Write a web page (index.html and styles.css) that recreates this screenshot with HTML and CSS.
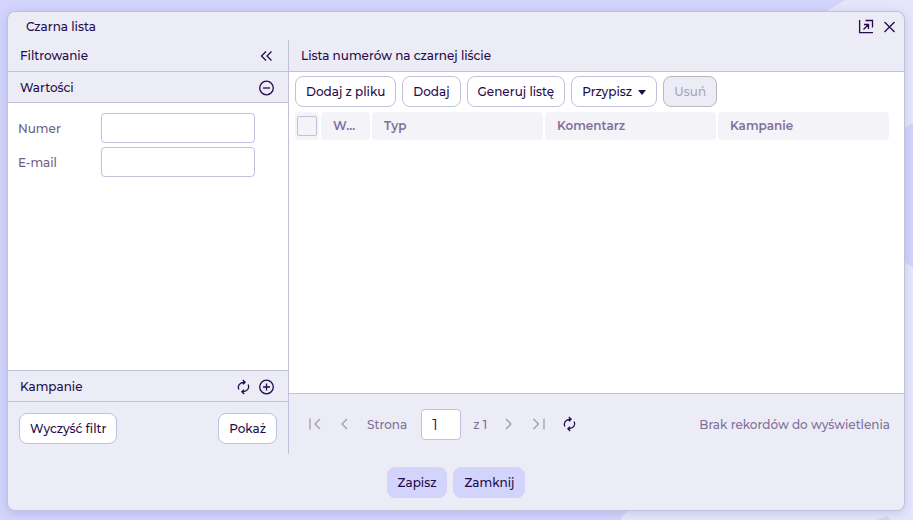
FILE: index.html
```html
<!DOCTYPE html>
<html lang="pl">
<head>
    <meta charset="UTF-8">
    <title>Czarna lista</title>
    <link rel="stylesheet" href="styles.css">
</head>
<body>
    <svg class="backdrop" viewBox="0 0 913 520" preserveAspectRatio="none" aria-hidden="true">
        <path class="shape-light" d="M845 0H913V123L620 300V170L825 12ZM913 267L700 140V410L620 520H913Z"/>
        <path class="shape-dark" d="M913 123L700 255V140L913 267ZM877 520L887 516L890 520Z"/>
    </svg>

    <div class="window">
        <header class="window-header">
            <h1>Czarna lista</h1>
            <div class="tools">
                <button type="button" class="icon-button" aria-label="Otwórz w nowym oknie">
                    <svg width="16" height="16" viewBox="0 0 16 16"><path d="M1.6 1V13.6H15M7.5 1.5H14.5V8.5M5.5 10.5L10 6M6 5.5H10.5V10"/></svg>
                </button>
                <button type="button" class="icon-button" aria-label="Zamknij okno">
                    <svg width="16" height="16" viewBox="0 0 16 16"><path d="M3.5 3L13.5 13M13.5 3L3.5 13"/></svg>
                </button>
            </div>
        </header>

        <div class="window-body">
            <aside class="filters">
                <div class="panel-header">
                    <h2>Filtrowanie</h2>
                    <button type="button" class="icon-button" aria-label="Zwiń panel">
                        <svg width="16" height="16" viewBox="0 0 16 16"><path d="M7 3.5L2.5 8L7 12.5M12.5 3.5L8 8L12.5 12.5"/></svg>
                    </button>
                </div>
                <div class="panel-header panel-section">
                    <h2>Wartości</h2>
                    <button type="button" class="icon-button" aria-label="Zwiń wartości">
                        <svg width="16" height="16" viewBox="0 0 16 16"><circle cx="7.5" cy="8" r="6.8"/><path d="M4 8H11"/></svg>
                    </button>
                </div>
                <form class="filter-form">
                    <label for="number">Numer</label>
                    <input type="text" id="number" name="number">
                    <label for="email">E-mail</label>
                    <input type="text" id="email" name="email">
                </form>
                <div class="panel-header panel-section panel-section-bottom">
                    <h2>Kampanie</h2>
                    <div class="tools">
                        <button type="button" class="icon-button" aria-label="Odśwież kampanie">
                            <svg width="16" height="16" viewBox="0 0 16 16"><path d="M2.8 10.5C1.2 6.8 3.4 3.5 8.6 3.2M6.8 1L9.1 3.2L7 5.4M12.2 5.5C13.8 9.2 11.6 12.5 6.4 12.8M8.2 15L5.9 12.8L8 10.6"/></svg>
                        </button>
                        <button type="button" class="icon-button" aria-label="Rozwiń kampanie">
                            <svg width="16" height="16" viewBox="0 0 16 16"><circle cx="7.5" cy="8" r="6.8"/><path d="M4 8H11M7.5 4.5V11.5"/></svg>
                        </button>
                    </div>
                </div>
                <div class="filter-actions">
                    <button type="button" class="button">Wyczyść filtr</button>
                    <button type="button" class="button">Pokaż</button>
                </div>
            </aside>

            <main class="list">
                <div class="panel-header">
                    <h2>Lista numerów na czarnej liście</h2>
                </div>
                <div class="toolbar">
                    <button type="button" class="button">Dodaj z pliku</button>
                    <button type="button" class="button">Dodaj</button>
                    <button type="button" class="button">Generuj listę</button>
                    <button type="button" class="button">Przypisz <span class="caret"></span></button>
                    <button type="button" class="button" disabled>Usuń</button>
                </div>
                <div class="grid">
                    <table>
                        <thead>
                            <tr>
                                <th class="col-check"><input type="checkbox" aria-label="Zaznacz wszystko"></th>
                                <th class="col-value">W...</th>
                                <th>Typ</th>
                                <th>Komentarz</th>
                                <th>Kampanie</th>
                            </tr>
                        </thead>
                        <tbody></tbody>
                    </table>
                </div>
                <div class="pager">
                    <button type="button" class="icon-button" disabled aria-label="Pierwsza strona">
                        <svg width="16" height="16" viewBox="0 0 16 16"><path d="M3 2.5V13.5M13 3L8 8L13 13"/></svg>
                    </button>
                    <button type="button" class="icon-button" disabled aria-label="Poprzednia strona">
                        <svg width="16" height="16" viewBox="0 0 16 16"><path d="M10 3L5 8L10 13"/></svg>
                    </button>
                    <label for="page">Strona</label>
                    <div class="page-number">
                        <input type="text" id="page" name="page" value="1">
                        <span>z 1</span>
                    </div>
                    <button type="button" class="icon-button" disabled aria-label="Następna strona">
                        <svg width="16" height="16" viewBox="0 0 16 16"><path d="M5 3L10 8L5 13"/></svg>
                    </button>
                    <button type="button" class="icon-button" disabled aria-label="Ostatnia strona">
                        <svg width="16" height="16" viewBox="0 0 16 16"><path d="M2.5 3L7.5 8L2.5 13M13 2.5V13.5"/></svg>
                    </button>
                    <button type="button" class="icon-button" aria-label="Odśwież listę">
                        <svg width="16" height="16" viewBox="0 0 16 16"><path d="M3.8 10.5C2.2 6.8 4.4 3.5 9.6 3.2M7.8 1L10.1 3.2L8 5.4M13.2 5.5C14.8 9.2 12.6 12.5 7.4 12.8M9.2 15L6.9 12.8L9 10.6"/></svg>
                    </button>
                    <span class="pager-info">Brak rekordów do wyświetlenia</span>
                </div>
            </main>
        </div>

        <footer class="window-footer">
            <button type="button" class="button button-primary">Zapisz</button>
            <button type="button" class="button button-primary">Zamknij</button>
        </footer>
    </div>
</body>
</html>
```
FILE: styles.css
```css
* {
    box-sizing: border-box;
}

body {
    margin: 0;
    height: 100vh;
    padding: 11px 8px 9px 7px;
    background-color: #d2d4fb;
    color: #250a4c;
    font: 500 12px/16px Montserrat, Inter, sans-serif;
}

.backdrop {
    position: absolute;
    top: 0;
    left: 0;
    width: 100%;
    height: 100%;
    z-index: -1;
}

.shape-light {
    fill: #e5e5fb;
}

.shape-dark {
    fill: #d2d4fb;
}

h1,
h2 {
    margin: 0;
    font-size: 12px;
    font-weight: 500;
}

.window {
    display: flex;
    flex-direction: column;
    height: 100%;
    background-color: #ececf6;
    border: 1px solid #c1c1dc;
    border-radius: 8px;
    box-shadow: 0 2px 10px rgba(80, 80, 150, 0.2);
}

.window-header {
    display: flex;
    align-items: center;
    justify-content: space-between;
    height: 28px;
    padding: 2px 7px 0 18px;
}

.window-body {
    display: flex;
    flex: 1;
    min-height: 0;
}

.tools {
    display: flex;
    gap: 7px;
}

.icon-button {
    display: flex;
    padding: 0;
    border: 0;
    background: none;
    color: inherit;
}

.icon-button:disabled {
    color: #a19bb0;
}

.icon-button svg {
    fill: none;
    stroke: currentColor;
    stroke-width: 1.3;
}

.filters {
    display: flex;
    flex-direction: column;
    width: 281px;
    border-right: 1px solid #c1c1dc;
}

.panel-header {
    display: flex;
    align-items: center;
    justify-content: space-between;
    height: 32px;
    flex-shrink: 0;
    padding: 0 13px 0 12px;
    border-bottom: 1px solid #c1c1dc;
}

.panel-section {
    height: 31px;
    padding-top: 2px;
}

.panel-section-bottom {
    height: 32px;
    border-top: 1px solid #c1c1dc;
}

.filter-form {
    display: grid;
    grid-template-columns: 79px 154px;
    gap: 4px;
    flex: 1;
    align-content: start;
    align-items: center;
    padding: 10px;
    background-color: #fff;
}

.filter-form label {
    line-height: 17px;
    color: #6f6088;
}

input {
    font: inherit;
    color: inherit;
}

input[type="text"] {
    height: 30px;
    width: 100%;
    padding: 0 10px;
    border: 1px solid #c1c1dc;
    border-radius: 4px;
    background-color: #fff;
}

.filter-actions {
    display: flex;
    justify-content: space-between;
    padding: 11px 11px 10px;
}

.button {
    height: 31px;
    padding: 0 10px;
    border: 1px solid #c1c1dc;
    border-radius: 8px;
    background-color: #fff;
    color: inherit;
    font: inherit;
    white-space: nowrap;
}

.button:disabled {
    background-color: #ececf6;
    border-color: #b9b6c2;
    color: #aaa5b9;
}

.button-primary {
    background-color: #d2d4fb;
    border-color: #d2d4fb;
}

.caret {
    display: inline-block;
    margin-left: 3px;
    border: 4px solid transparent;
    border-top: 5px solid #250a4c;
    border-bottom: 0;
    vertical-align: 1px;
}

.list {
    display: flex;
    flex-direction: column;
    flex: 1;
    min-width: 0;
}

.toolbar {
    display: flex;
    gap: 6px;
    padding: 4px 6px;
    background-color: #fff;
}

.grid {
    flex: 1;
    padding: 1px 13px 0 4px;
    background-color: #fff;
}

.grid table {
    width: 100%;
    table-layout: fixed;
    border-spacing: 2px 0;
}

.grid th {
    height: 28px;
    padding: 0 12px;
    border-radius: 4px;
    background-color: #f4f3f8;
    color: #80709a;
    font-weight: 600;
    text-align: left;
}

.grid .col-check {
    width: 24px;
    padding: 0 2px;
}

.grid .col-value {
    width: 49px;
}

input[type="checkbox"] {
    display: block;
    appearance: none;
    width: 20px;
    height: 20px;
    margin: 0;
    border: 1px solid #c1c1dc;
    border-radius: 2px;
}

.pager {
    display: flex;
    align-items: center;
    gap: 14px;
    height: 61px;
    padding: 0 14px 0 18px;
    border-top: 1px solid #c1c1dc;
    color: #80709a;
    line-height: 17px;
}

.page-number {
    display: flex;
    align-items: center;
    gap: 12px;
}

.pager input[type="text"] {
    width: 40px;
    height: 31px;
    font-size: 15px;
    font-weight: 400;
    color: #250a4c;
}

.pager .icon-button:not(:disabled) {
    color: #250a4c;
}

.pager-info {
    margin-left: auto;
}

.window-footer {
    display: flex;
    justify-content: center;
    gap: 6px;
    height: 56px;
    padding-top: 13px;
}
```
